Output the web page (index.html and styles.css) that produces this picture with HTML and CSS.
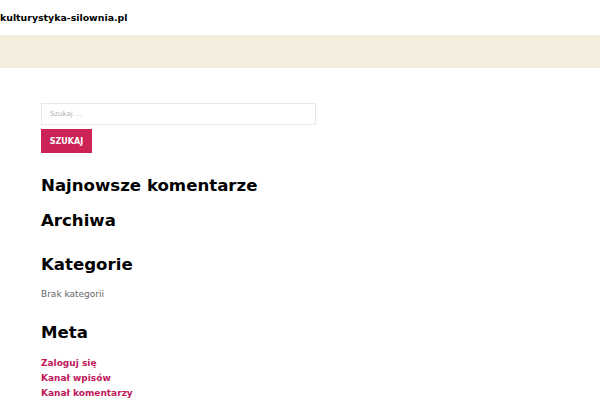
FILE: index.html
```html
<!DOCTYPE html>
<html lang="pl">
<head>
<meta charset="utf-8">
<link rel="stylesheet" href="styles.css">
</head>
<body>
<header class="site-header">
  <a class="site-title" href="#">kulturystyka-silownia.pl</a>
</header>
<div class="band"></div>
<main class="sidebar">
  <form class="search">
    <input class="search-field" type="search" placeholder="Szukaj …">
    <button class="search-btn" type="button">SZUKAJ</button>
  </form>
  <section class="widget w-comments"><h2>Najnowsze komentarze</h2></section>
  <section class="widget w-archives"><h2>Archiwa</h2></section>
  <section class="widget w-cats"><h2>Kategorie</h2><p class="empty">Brak kategorii</p></section>
  <section class="widget w-meta"><h2>Meta</h2>
    <ul class="links">
      <li><a href="#">Zaloguj się</a></li>
      <li><a href="#">Kanał wpisów</a></li>
      <li><a href="#">Kanał komentarzy</a></li>
    </ul>
  </section>
</main>
</body>
</html>
```
FILE: styles.css
```css
* { box-sizing: border-box; }
body { margin: 0; font-family: "DejaVu Sans", sans-serif; color: #000; background: #fff; }
.site-header { height: 35px; display: flex; align-items: center; }
.site-title { font-weight: bold; font-size: 9.4px; color: #000; text-decoration: none; }
.band { height: 33px; background: #f5eedf; }
.sidebar { padding: 35px 0 0 41px; }
.search { display: flex; flex-direction: column; gap: 4px; align-items: flex-start; }
.search-field { width: 275px; height: 22px; border: 1px solid #e8e8e8; padding: 0 8px; font-family: inherit; font-size: 7px; color: #999; outline: none; }
.search-field::placeholder { color: #b0b0b0; }
.search-btn { width: 51px; height: 24px; background: #cc2255; color: #fff; border: 0; font-family: inherit; font-weight: bold; font-size: 8px; padding: 0; }
.widget h2 { margin: 0; font-size: 16.6px; font-weight: bold; line-height: 20px; }
.w-comments { margin-top: 23px; }
.w-archives { margin-top: 14.6px; }
.w-cats { margin-top: 24px; }
.empty { margin: 13.4px 0 0; font-size: 9px; line-height: 12px; color: #666; }
.w-meta { margin-top: 22.6px; }
.links { list-style: none; margin: 13.6px 0 0; padding: 0; }
.links li { line-height: 15px; font-size: 9px; }
.links a { font-size: 9px; font-weight: bold; color: #c0185a; text-decoration: none; }
```
